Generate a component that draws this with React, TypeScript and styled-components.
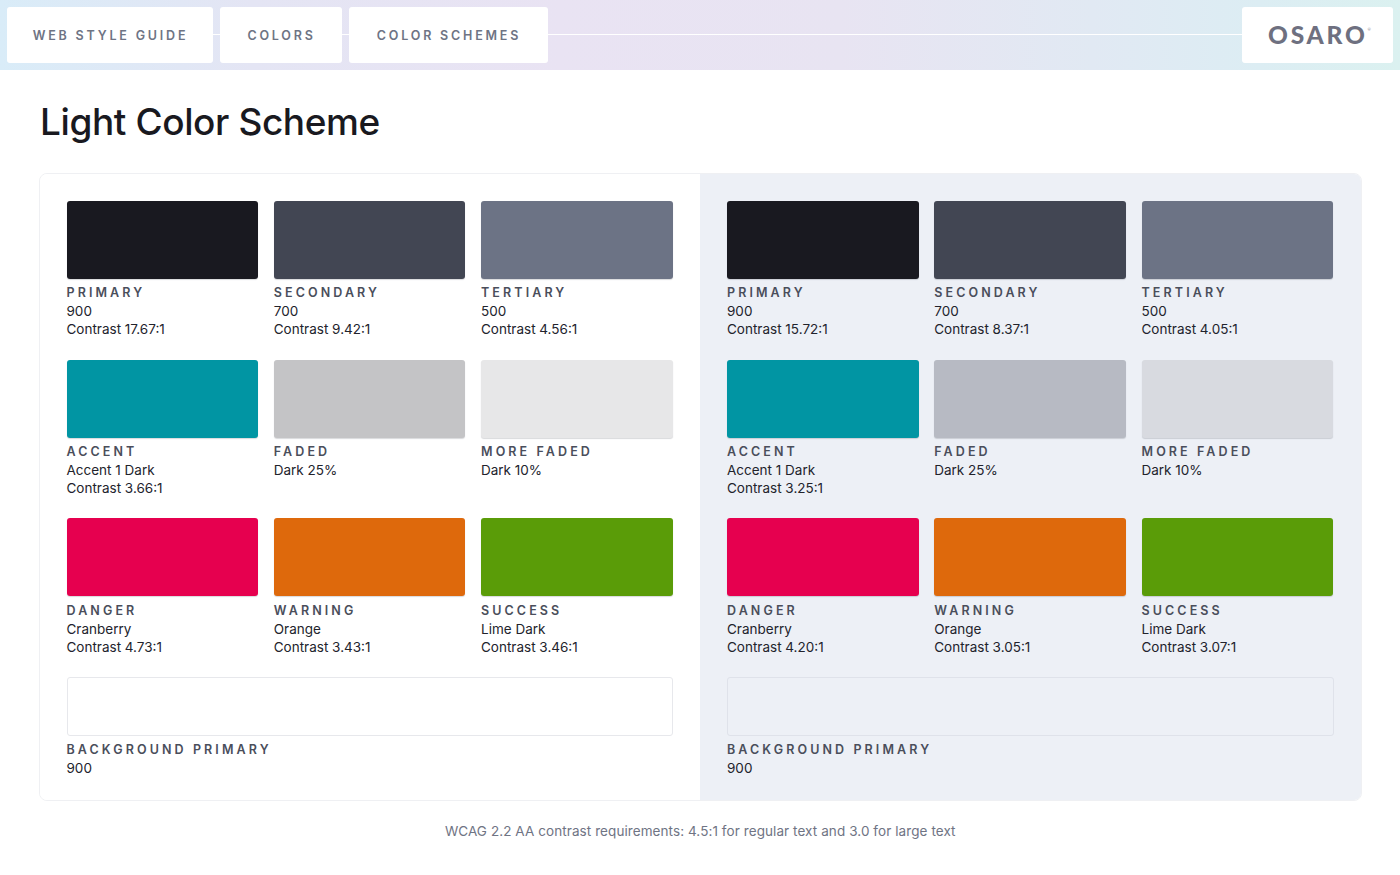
import React from "react";
import styled, { createGlobalStyle } from "styled-components";

const Global = createGlobalStyle`
  html, body { margin: 0; padding: 0; background: #fff; }
  body { font-family: "Inter", "Noto Sans", sans-serif; color: #191920; }
  * { box-sizing: border-box; }
`;

const Page = styled.div`
  width: 1400px;
  height: 875px;
  overflow: hidden;
  background: #fff;
`;

const Header = styled.header`
  height: 69.5px;
  padding: 7px;
  display: flex;
  align-items: flex-start;
  gap: 7px;
  background: linear-gradient(90deg, #d9ecf8 0%, #e4e5f4 18%, #e9e3f3 40%, #e8e4f2 60%, #e1e9f3 78%, #dcedf3 90%, #dbf1f0 100%);
`;

const NavCell = styled.a<{ $w: number }>`
  height: 56px;
  width: ${(p) => p.$w}px;
  flex: none;
  display: flex;
  align-items: center;
  justify-content: center;
  padding-left: 1px;
  background: #fff;
  border-radius: 3px;
  font-size: 12.5px;
  font-weight: 600;
  letter-spacing: 2.8px;
  color: #6e7484;
  white-space: nowrap;
  position: relative;
  &::after {
    content: "";
    position: absolute;
    left: 100%;
    top: 27px;
    width: 7px;
    height: 1px;
    background: #fff;
  }
`;

const Rule = styled.div`
  flex: 1;
  height: 1px;
  margin: 27px -7px 0;
  background: #fff;
`;

const Logo = styled.div`
  width: 151px;
  height: 56px;
  flex: none;
  display: flex;
  align-items: center;
  justify-content: center;
  padding: 0 0 2px 4px;
  background: #fff;
  border-radius: 3px;
  font-family: "Lato", sans-serif;
  font-size: 24.5px;
  font-weight: 900;
  letter-spacing: 2.75px;
  color: #6e7080;
`;

const Reg = styled.sup`
  font-size: 4px;
  font-weight: 400;
  letter-spacing: 0;
  line-height: 0;
  margin: -8px 0 0 0;
`;

const Main = styled.main`
  padding: 0 38px 0 38.5px;
`;

const Title = styled.h1`
  margin: 0;
  height: 103.5px;
  padding: 27.5px 0 0 1.5px;
  font-size: 37px;
  line-height: 50px;
  font-weight: 500;
  letter-spacing: -0.4px;
  color: #191920;
`;

const Panel = styled.section`
  height: 628px;
  display: grid;
  grid-template-columns: 660.5px 662px;
  border-radius: 8px;
  border: 1px solid #eff0f3;
  overflow: hidden;
`;

const Side = styled.div<{ $tinted?: boolean }>`
  padding: 27px 27px 0 27px;
  background: ${(p) => (p.$tinted ? "#edf0f6" : "#ffffff")};
`;

const Grid = styled.div`
  display: grid;
  grid-template-columns: repeat(3, 191.5px);
  column-gap: 15.75px;
  grid-auto-rows: 158.6px;
  margin-bottom: 0.7px;
`;

const Swatch = styled.div<{ $c: string }>`
  height: 78px;
  border-radius: 3px;
  background: ${(p) => p.$c};
  box-shadow: 0 1px 1px rgba(40, 44, 60, 0.18);
`;

const Label = styled.div`
  margin: 6.4px 0 1px;
  font-size: 12.5px;
  line-height: 16px;
  font-weight: 600;
  letter-spacing: 3.1px;
  color: #4a4e5b;
  white-space: nowrap;
`;

const Detail = styled.div`
  font-size: 13.5px;
  line-height: 18px;
  font-weight: 400;
  letter-spacing: 0;
  color: #22232c;
  white-space: nowrap;
`;

const WideSwatch = styled.div<{ $tinted?: boolean }>`
  width: 606.5px;
  height: 58.5px;
  border-radius: 3px;
  background: ${(p) => (p.$tinted ? "#edf0f6" : "#fff")};
  border: 1px solid ${(p) => (p.$tinted ? "#dfe2ea" : "#e7e8ec")};
`;

const Note = styled.p`
  margin: 19.5px 0 0;
  text-align: center;
  font-size: 13.5px;
  line-height: 20px;
  letter-spacing: 0.08px;
  color: #6f7484;
`;

type Item = { label: string; color: string; lines: string[] };

const build = (c: string[], faded: string, more: string): Item[] => [
  { label: "PRIMARY", color: "#191920", lines: ["900", `Contrast ${c[0]}`] },
  { label: "SECONDARY", color: "#424653", lines: ["700", `Contrast ${c[1]}`] },
  { label: "TERTIARY", color: "#6c7385", lines: ["500", `Contrast ${c[2]}`] },
  { label: "ACCENT", color: "#0195a3", lines: ["Accent 1 Dark", `Contrast ${c[3]}`] },
  { label: "FADED", color: faded, lines: ["Dark 25%"] },
  { label: "MORE FADED", color: more, lines: ["Dark 10%"] },
  { label: "DANGER", color: "#e6004f", lines: ["Cranberry", `Contrast ${c[4]}`] },
  { label: "WARNING", color: "#de690c", lines: ["Orange", `Contrast ${c[5]}`] },
  { label: "SUCCESS", color: "#5a9c08", lines: ["Lime Dark", `Contrast ${c[6]}`] },
];

const light = build(["17.67:1", "9.42:1", "4.56:1", "3.66:1", "4.73:1", "3.43:1", "3.46:1"], "#c4c4c6", "#e7e7e8");
const dark = build(["15.72:1", "8.37:1", "4.05:1", "3.25:1", "4.20:1", "3.05:1", "3.07:1"], "#b7bac3", "#d8dae0");

const Column = ({ items, tinted }: { items: Item[]; tinted?: boolean }) => (
  <Side $tinted={tinted}>
    <Grid>
      {items.map((it) => (
        <div key={it.label}>
          <Swatch $c={it.color} />
          <Label>{it.label}</Label>
          {it.lines.map((l) => (
            <Detail key={l}>{l}</Detail>
          ))}
        </div>
      ))}
    </Grid>
    <WideSwatch $tinted={tinted} />
    <Label>BACKGROUND PRIMARY</Label>
    <Detail>900</Detail>
  </Side>
);

export default function App() {
  return (
    <Page>
      <Global />
      <Header>
        <NavCell $w={206}>WEB STYLE GUIDE</NavCell>
        <NavCell $w={122}>COLORS</NavCell>
        <NavCell $w={199}>COLOR SCHEMES</NavCell>
        <Rule />
        <Logo>
          OSARO<Reg>®</Reg>
        </Logo>
      </Header>
      <Main>
        <Title>Light Color Scheme</Title>
        <Panel>
          <Column items={light} />
          <Column items={dark} tinted />
        </Panel>
        <Note>WCAG 2.2 AA contrast requirements: 4.5:1 for regular text and 3.0 for large text</Note>
      </Main>
    </Page>
  );
}
